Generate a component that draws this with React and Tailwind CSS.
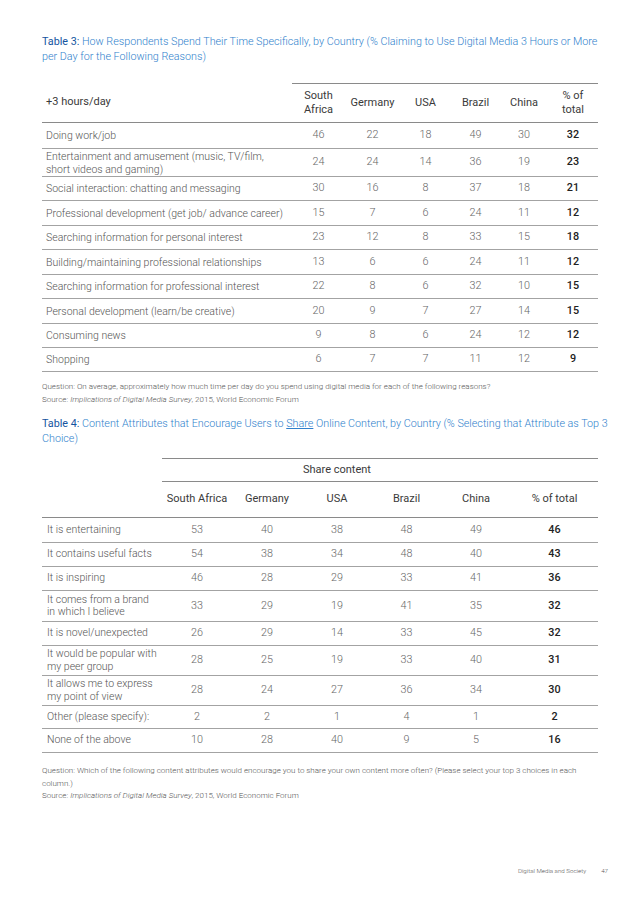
const t3Cols = [
  { name: ["South", "Africa"], w: "w-[53px]" },
  { name: ["Germany"], w: "w-[55px]" },
  { name: ["USA"], w: "w-[51px]" },
  { name: ["Brazil"], w: "w-[49px]" },
  { name: ["China"], w: "w-[48px]" },
  { name: ["% of", "total"], w: "w-[50px]" },
];

const t3Rows = [
  { label: ["Doing work/job"], v: [46, 22, 18, 49, 30, 32], h: "h-[26px]" },
  { label: ["Entertainment and amusement (music, TV/film,", "short videos and gaming)"], v: [24, 24, 14, 36, 19, 23], h: "h-[28px]" },
  { label: ["Social interaction: chatting and messaging"], v: [30, 16, 8, 37, 18, 21], h: "h-[24px]" },
  { label: ["Professional development (get job/ advance career)"], v: [15, 7, 6, 24, 11, 12], h: "h-[25px]" },
  { label: ["Searching information for personal interest"], v: [23, 12, 8, 33, 15, 18], h: "h-[24px]" },
  { label: ["Building/maintaining professional relationships"], v: [13, 6, 6, 24, 11, 12], h: "h-[25px]" },
  { label: ["Searching information for professional interest"], v: [22, 8, 6, 32, 10, 15], h: "h-[24px]" },
  { label: ["Personal development (learn/be creative)"], v: [20, 9, 7, 27, 14, 15], h: "h-[25px]" },
  { label: ["Consuming news"], v: [9, 8, 6, 24, 12, 12], h: "h-[24px]" },
  { label: ["Shopping"], v: [6, 7, 7, 11, 12, 9], h: "h-[24px]" },
];

const t4Cols = [
  { name: "South Africa", w: "w-[70px]" },
  { name: "Germany", w: "w-[70px]" },
  { name: "USA", w: "w-[70px]" },
  { name: "Brazil", w: "w-[69px]" },
  { name: "China", w: "w-[70px]" },
  { name: "% of total", w: "w-[87px]" },
];

const t4Rows = [
  { label: ["It is entertaining"], v: [53, 40, 38, 48, 49, 46], h: "h-[25px]" },
  { label: ["It contains useful facts"], v: [54, 38, 34, 48, 40, 43], h: "h-[24px]" },
  { label: ["It is inspiring"], v: [46, 28, 29, 33, 41, 36], h: "h-[24px]" },
  { label: ["It comes from a brand", "in which I believe"], v: [33, 29, 19, 41, 35, 32], h: "h-[31px]" },
  { label: ["It is novel/unexpected"], v: [26, 29, 14, 33, 45, 32], h: "h-[24px]" },
  { label: ["It would be popular with", "my peer group"], v: [28, 25, 19, 33, 40, 31], h: "h-[30px]" },
  { label: ["It allows me to express", "my point of view"], v: [28, 24, 27, 36, 34, 30], h: "h-[30px]" },
  { label: ["Other (please specify):"], v: [2, 2, 1, 4, 1, 2], h: "h-[23px]" },
  { label: ["None of the above"], v: [10, 28, 40, 9, 5, 16], h: "h-[24px]" },
];

function Lines({ lines }) {
  return lines.map((l, i) => (
    <span key={i} className="block whitespace-nowrap">
      {l}
    </span>
  ));
}

function Table3() {
  return (
    <div className="mt-[19px] w-[556px]">
      <div className="flex h-[40px] border-b border-[#8a8a8a] text-[#3a3a3a]">
        <div className="w-[250px] flex items-center pl-[4px] text-[11px]">+3 hours/day</div>
        <div className="flex border-t border-[#8a8a8a]">
          {t3Cols.map((c) => (
            <div key={c.name[0]} className={`${c.w} flex items-center justify-center text-center text-[11px] leading-[14px]`}>
              <div>
                <Lines lines={c.name} />
              </div>
            </div>
          ))}
        </div>
      </div>
      {t3Rows.map((r) => (
        <div key={r.label[0]} className={`flex ${r.h} border-b border-[#a3a3a3]`}>
          <div className="w-[250px] flex items-center pl-[4px] text-[10.5px] leading-[13px] font-light text-[#555]">
            <div>
              <Lines lines={r.label} />
            </div>
          </div>
          {r.v.map((n, i) => (
            <div
              key={i}
              className={`${t3Cols[i].w} flex items-center justify-center text-[10.8px] ${
                i === 5 ? "font-medium text-[#222]" : "font-light text-[#666]"
              }`}
            >
              {n}
            </div>
          ))}
        </div>
      ))}
    </div>
  );
}

function Table4() {
  return (
    <div className="mt-[12px] w-[556px]">
      <div className="flex">
        <div className="w-[120px]" />
        <div className="w-[436px] h-[24px] border-y border-[#8a8a8a] flex items-center pl-[141px] text-[11px] text-[#3a3a3a]">
          Share content
        </div>
      </div>
      <div className="flex h-[36px] border-b border-[#8a8a8a] text-[#3a3a3a]">
        <div className="w-[120px]" />
        {t4Cols.map((c) => (
          <div key={c.name} className={`${c.w} flex items-center justify-center text-[11px]`}>
            {c.name}
          </div>
        ))}
      </div>
      {t4Rows.map((r) => (
        <div key={r.label[0]} className={`flex ${r.h} border-b border-[#a3a3a3]`}>
          <div className="w-[120px] flex items-center pl-[5px] text-[10.5px] leading-[12.5px] font-light text-[#555]">
            <div>
              <Lines lines={r.label} />
            </div>
          </div>
          {r.v.map((n, i) => (
            <div
              key={i}
              className={`${t4Cols[i].w} flex items-center justify-center text-[10.8px] ${
                i === 5 ? "font-medium text-[#222]" : "font-light text-[#666]"
              }`}
            >
              {n}
            </div>
          ))}
        </div>
      ))}
    </div>
  );
}

function Source() {
  return (
    <div className="whitespace-nowrap">
      Source: <i>Implications of Digital Media Survey</i>, 2015, World Economic Forum
    </div>
  );
}

export default function App() {
  return (
    <div className="w-[636px] h-[900px] bg-white flex flex-col font-['Roboto','Liberation_Sans',Arial,sans-serif]">
      <div className="pl-[42px] pt-[34px]">
        <div className="text-[10.75px] leading-[15px] font-light text-[#2f7fcc]">
          <div className="whitespace-nowrap">
            <span className="font-normal text-[#14559f]">Table 3:</span> How Respondents Spend Their Time Specifically, by Country (% Claiming to Use Digital Media 3 Hours or More
          </div>
          <div className="whitespace-nowrap">per Day for the Following Reasons)</div>
        </div>

        <Table3 />

        <div className="mt-[9px] text-[8px] leading-[12.5px] font-light text-[#555]">
          <div className="whitespace-nowrap">
            Question: On average, approximately how much time per day do you spend using digital media for each of the following reasons?
          </div>
          <Source />
        </div>

        <div className="mt-[10px] text-[10.75px] leading-[15px] font-light text-[#2f7fcc]">
          <div className="whitespace-nowrap">
            <span className="font-normal text-[#14559f]">Table 4:</span> Content Attributes that Encourage Users to{" "}
            <span className="underline">Share</span> Online Content, by Country (% Selecting that Attribute as Top 3
          </div>
          <div className="whitespace-nowrap">Choice)</div>
        </div>

        <Table4 />

        <div className="mt-[12px] text-[8px] leading-[12.5px] font-light text-[#555]">
          <div className="whitespace-nowrap">
            Question: Which of the following content attributes would encourage you to share your own content more often? (Please select your top 3 choices in each
          </div>
          <div className="whitespace-nowrap">column.)</div>
          <Source />
        </div>
      </div>

      <div className="mt-auto pb-[24px] pr-[28px] flex justify-end gap-[15px] text-[6.2px] leading-[10px] font-light text-[#555]">
        <span>Digital Media and Society</span>
        <span>47</span>
      </div>
    </div>
  );
}
